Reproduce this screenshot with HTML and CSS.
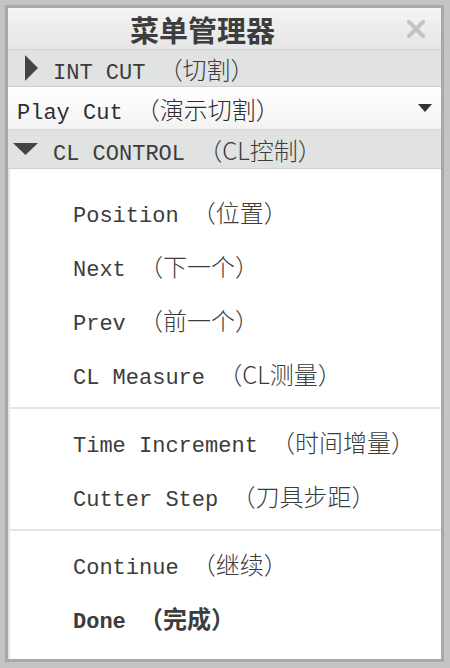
FILE: index.html
```html
<!DOCTYPE html>
<html lang="zh-CN">
<head>
  <meta charset="UTF-8">
  <meta name="viewport" content="width=device-width, initial-scale=1.0">
  <title>菜单管理器</title>
  <link rel="stylesheet" href="styles.css">
</head>
<body>
  <div class="window">
    <div class="frame">
      <div class="title-bar">
        <h2 class="title">菜单管理器</h2>
        <span class="close">
          <svg width="18" height="18" viewBox="0 0 18 18"><path d="M2 2 L16 16 M16 2 L2 16" stroke="#c3c3c3" stroke-width="4" stroke-linecap="square"/></svg>
        </span>
      </div>

      <div class="group-row int-cut">
        <svg class="arrow" width="13" height="26" viewBox="0 0 13 26"><path d="M0 0 L13 13 L0 26 Z" fill="#444"/></svg>
        <span>INT CUT <span class="cn">（切割）</span></span>
      </div>

      <div class="select-row">
        <span>Play Cut <span class="cn">（演示切割）</span></span>
        <svg width="14" height="8" viewBox="0 0 14 8"><path d="M0 0 L14 0 L7 8 Z" fill="#333"/></svg>
      </div>

      <div class="group-row cl-control">
        <svg class="arrow" width="25" height="12" viewBox="0 0 25 12"><path d="M0 0 L25 0 L12.5 12 Z" fill="#444"/></svg>
        <span>CL CONTROL <span class="cn">（CL控制）</span></span>
      </div>

      <div class="menu-list">
        <ul class="menu-group first">
          <li>Position <span class="cn">（位置）</span></li>
          <li>Next <span class="cn">（下一个）</span></li>
          <li>Prev <span class="cn">（前一个）</span></li>
          <li>CL Measure <span class="cn">（CL测量）</span></li>
        </ul>
        <ul class="menu-group">
          <li>Time Increment <span class="cn">（时间增量）</span></li>
          <li>Cutter Step <span class="cn">（刀具步距）</span></li>
        </ul>
        <ul class="menu-group last">
          <li>Continue <span class="cn">（继续）</span></li>
          <li class="bold">Done <span class="cn">（完成）</span></li>
        </ul>
      </div>
    </div>
  </div>
</body>
</html>
```

FILE: styles.css
```css
* {
  margin: 0;
  padding: 0;
  box-sizing: border-box;
}

body {
  width: 450px;
  height: 668px;
  overflow: hidden;
  background: #c4c4c4;
  font-family: "Liberation Mono", "Noto Sans CJK SC", monospace;
  color: #3c3c3c;
}

.window {
  height: 668px;
  padding: 5px 6px 6px 5px;
  background: #c4c4c4;
}

.frame {
  height: 100%;
  display: flex;
  flex-direction: column;
  border: 3px solid #a9a9a9;
  background: #fff;
}

.cn {
  font-family: "Noto Sans CJK SC", sans-serif;
  font-size: 24px;
  font-weight: 300;
}

.title-bar {
  height: 42px;
  display: flex;
  align-items: center;
  background: linear-gradient(#f4f4f4, #e6e6e6);
  border-bottom: 1px solid #cfd1d1;
}

.title {
  flex: 1;
  text-align: center;
  font-family: "Noto Sans CJK SC", sans-serif;
  font-size: 29px;
  font-weight: 700;
  color: #3d3d3d;
  padding-right: 10px;
}

.close {
  margin-right: 16px;
}

.close svg {
  display: block;
}

.group-row {
  display: flex;
  align-items: center;
  font-size: 22px;
  background: #e1e3e3;
  border-bottom: 1px solid #cdd0d0;
}

.group-row .arrow {
  display: block;
  flex-shrink: 0;
}

.int-cut {
  height: 37px;
  padding-left: 17px;
  gap: 15px;
}

.cl-control {
  height: 40px;
  padding-left: 5px;
  gap: 15px;
  border-top: 1px solid #d6d8d8;
}

.select-row {
  height: 42px;
  display: flex;
  align-items: center;
  justify-content: space-between;
  padding: 0 9px 0 9px;
  font-size: 22px;
  color: #2e2e2e;
  background: linear-gradient(#ffffff, #f3f3f3);
}

.menu-list {
  flex: 1;
  background: #fff;
  border-left: 2px solid #e4e4e4;
}

.menu-group {
  list-style: none;
  padding: 6px 0;
  border-bottom: 2px solid #e6e8e8;
}

.menu-group.first {
  padding-top: 16px;
}

.menu-group.last {
  border-bottom: 0;
}

.menu-group li {
  height: 54px;
  line-height: 54px;
  padding-left: 63px;
  font-size: 22px;
  white-space: nowrap;
}

.menu-group li.bold {
  font-weight: 700;
}

.menu-group li.bold .cn {
  font-weight: 700;
}
```
